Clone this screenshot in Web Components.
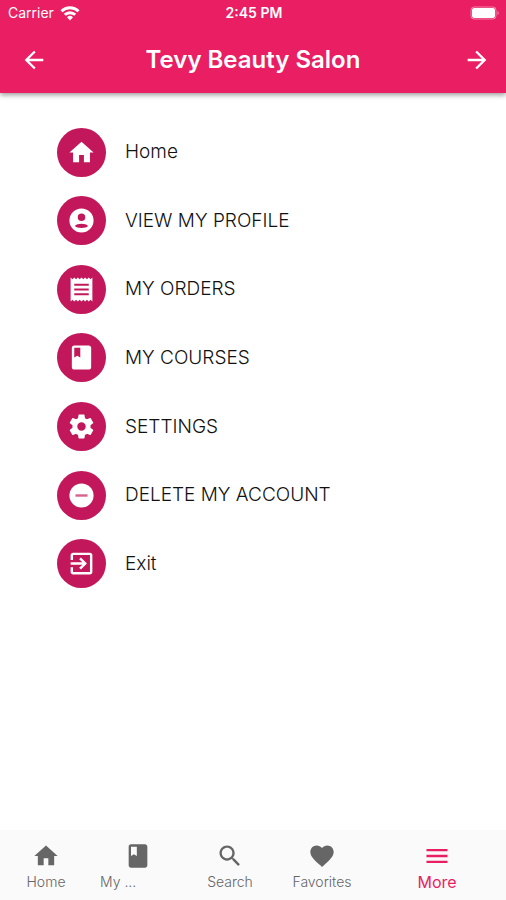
<!DOCTYPE html>
<html lang="en">
<head>
<meta charset="utf-8">
<meta name="viewport" content="width=device-width, initial-scale=1">
<title>Tevy Beauty Salon</title>
<style>
  body {
    margin: 0;
    font-family: Inter, 'Liberation Sans', sans-serif;
    background: #fff;
  }
</style>
</head>
<body>
<salon-app></salon-app>

<script>
// 24x24 icon shapes, filled with the current text colour
const ICONS = {
  home: '<path d="M10 20v-6h4v6h5v-8h3L12 3 2 12h3v8z"/>',
  back: '<path d="M20 11H7.83l5.59-5.59L12 4l-8 8 8 8 1.41-1.41L7.83 13H20v-2z"/>',
  forward: '<path d="M12 4l-1.41 1.41L16.17 11H4v2h12.17l-5.58 5.59L12 20l8-8z"/>',
  profile: '<path fill-rule="evenodd" d="M12 2a10 10 0 1 0 0 20 10 10 0 0 0 0-20zm0 4.2a3.1 3.1 0 1 1 0 6.2 3.1 3.1 0 0 1 0-6.2zm0 12c-2.500 0-4.400-.4-5.400-1.600.6-1.300 3.400-1.900 5.400-1.900s4.800.6 5.400 1.900c-1 1.200-2.900 1.600-5.400 1.600z"/>',
  orders: '<path d="M18 16.800H6v-1.600h12v1.600zm0-4H6v-1.600h12v1.600zm0-4H6V7.200h12v1.600zM3 22l1.500-1.500L6 22l1.500-1.500L9 22l1.500-1.500L12 22l1.500-1.500L15 22l1.500-1.500L18 22l1.500-1.500L21 22V2l-1.500 1.500L18 2l-1.500 1.500L15 2l-1.500 1.500L12 2l-1.500 1.500L9 2 7.500 3.500 6 2 4.500 3.500 3 2v20z"/>',
  book: '<path d="M18 2H6c-1.100 0-2 .9-2 2v16c0 1.100.9 2 2 2h12c1.100 0 2-.9 2-2V4c0-1.100-.9-2-2-2zM6 4h5v8l-2.500-1.500L6 12V4z"/>',
  settings: '<path d="M19.430 12.980c.04-.32.07-.64.07-.98s-.03-.66-.07-.98l2.110-1.650c.19-.15.24-.42.12-.64l-2-3.460c-.12-.22-.39-.3-.61-.22l-2.490 1c-.52-.4-1.080-.73-1.690-.98l-.38-2.650C14.460 2.180 14.250 2 14 2h-4c-.25 0-.46.18-.49.42l-.38 2.650c-.61.25-1.170.59-1.690.98l-2.490-1c-.23-.09-.49 0-.61.22l-2 3.460c-.13.22-.07.49.12.64l2.110 1.650c-.04.32-.07.65-.07.98s.03.66.07.98l-2.110 1.650c-.19.15-.24.42-.12.64l2 3.460c.12.22.39.3.61.22l2.490-1c.52.4 1.080.73 1.690.98l.38 2.650c.03.24.24.42.49.42h4c.25 0 .46-.18.49-.42l.38-2.650c.61-.25 1.170-.59 1.690-.98l2.490 1c.23.09.49 0 .61-.22l2-3.460c.12-.22.07-.49-.12-.64l-2.110-1.650zM12 15.500c-1.930 0-3.500-1.570-3.500-3.500s1.570-3.500 3.500-3.500 3.500 1.570 3.500 3.500-1.570 3.500-3.500 3.500z"/>',
  remove: '<path d="M12 2a10 10 0 1 0 0 20 10 10 0 0 0 0-20z"/><path fill="#d8628e" d="M7 11h10v2H7z"/>',
  exit: '<path d="M10.090 15.590L11.500 17l5-5-5-5-1.410 1.410L12.670 11H3v2h9.670l-2.580 2.590zM19 3H5c-1.110 0-2 .9-2 2v4h2V5h14v14H5v-4H3v4c0 1.100.89 2 2 2h14c1.100 0 2-.9 2-2V5c0-1.100-.9-2-2-2z"/>',
  search: '<path d="M15.500 14h-.79l-.28-.27C15.410 12.590 16 11.110 16 9.500 16 5.910 13.090 3 9.500 3S3 5.910 3 9.500 5.910 16 9.500 16c1.610 0 3.090-.59 4.230-1.570l.27.28v.79l5 4.990L20.490 19l-4.990-5zm-6 0C7.010 14 5 11.990 5 9.500S7.010 5 9.500 5 14 7.010 14 9.500 11.990 14 9.500 14z"/>',
  heart: '<path d="M12 21.350l-1.450-1.320C5.400 15.360 2 12.280 2 8.500 2 5.420 4.420 3 7.500 3c1.740 0 3.410.81 4.500 2.090C13.090 3.810 14.760 3 16.500 3 19.580 3 22 5.420 22 8.500c0 3.780-3.400 6.860-8.550 11.540L12 21.350z"/>',
  more: '<path d="M3 18h18v-2H3v2zm0-5h18v-2H3v2zm0-7v2h18V6H3z"/>'
};

class AppIcon extends HTMLElement {
  connectedCallback() {
    if (this.shadowRoot) return;
    this.attachShadow({ mode: 'open' }).innerHTML = `
      <style>
        :host { display: block; width: var(--icon-size, 28px); height: var(--icon-size, 28px); }
        svg { display: block; width: 100%; height: 100%; fill: currentColor; }
      </style>
      <svg viewBox="0 0 24 24" aria-hidden="true">${ICONS[this.getAttribute('name')]}</svg>
    `;
  }
}

class StatusBar extends HTMLElement {
  connectedCallback() {
    if (this.shadowRoot) return;
    this.attachShadow({ mode: 'open' }).innerHTML = `
      <style>
        :host {
          display: grid;
          grid-template-columns: 1fr auto 1fr;
          align-items: center;
          height: 26px;
          padding: 0 6px 0 8px;
          font-size: 14px;
          line-height: 16px;
        }
        .carrier { display: flex; align-items: center; gap: 6px; }
        .time { font-weight: 600; }
        svg { display: block; }
        .battery { justify-self: end; }
      </style>
      <div class="carrier">
        <span>Carrier</span>
        <svg width="20" height="15" viewBox="0 0 20 15" fill="none" stroke="#fff" stroke-width="3" aria-hidden="true">
          <path d="M1.5 5.2a12 12 0 0 1 17 0"/>
          <path d="M4.8 8.8a7.4 7.4 0 0 1 10.4 0"/>
          <path d="M10 14.5l-3-3.2a4.3 4.3 0 0 1 6 0z" fill="#fff" stroke="none"/>
        </svg>
      </div>
      <span class="time"><slot></slot></span>
      <svg class="battery" width="30" height="14" viewBox="0 0 30 14" aria-hidden="true">
        <rect x="1" y="1" width="25" height="12" rx="3" fill="none" stroke="#fff" stroke-opacity=".45"/>
        <rect x="2" y="2" width="23" height="10" rx="2" fill="#fff"/>
        <path d="M27.5 5v4c1.6-.6 1.6-3.4 0-4z" fill="#fff" fill-opacity=".5"/>
      </svg>
    `;
  }
}

class AppHeader extends HTMLElement {
  connectedCallback() {
    if (this.shadowRoot) return;
    this.attachShadow({ mode: 'open' }).innerHTML = `
      <style>
        :host {
          display: block;
          position: relative;
          color: #fff;
          background: #e91e63;
          box-shadow: 0 2px 5px rgba(0, 0, 0, 0.4);
        }
        .bar {
          display: grid;
          grid-template-columns: 1fr auto 1fr;
          align-items: center;
          height: 67px;
          padding: 0 15px;
          box-sizing: border-box;
        }
        h1 { margin: 0; font-size: 24px; line-height: 32px; font-weight: 600; }
        button {
          justify-self: start;
          padding: 0 0 0 5px;
          border: 0;
          color: inherit;
          background: none;
          cursor: pointer;
        }
        button:last-child { justify-self: end; }
      </style>
      <status-bar>2:45 PM</status-bar>
      <div class="bar">
        <button aria-label="Back"><app-icon name="back"></app-icon></button>
        <h1><slot></slot></h1>
        <button aria-label="Forward"><app-icon name="forward"></app-icon></button>
      </div>
    `;
  }
}

class MenuItem extends HTMLElement {
  connectedCallback() {
    if (this.shadowRoot) return;
    this.attachShadow({ mode: 'open' }).innerHTML = `
      <style>
        :host { display: flex; align-items: center; }
        a {
          display: flex;
          align-items: center;
          gap: 19px;
          color: #111;
          font-size: 19px;
          line-height: 24px;
          font-weight: 300;
          text-decoration: none;
        }
        .circle {
          display: grid;
          place-items: center;
          flex: none;
          width: 49px;
          height: 49px;
          border-radius: 50%;
          color: #fff;
          background: #c2185b;
          --icon-size: 29px;
        }
      </style>
      <a href="#">
        <span class="circle"><app-icon name="${this.getAttribute('icon')}"></app-icon></span>
        <span><slot></slot></span>
      </a>
    `;
  }
}

class NavTab extends HTMLElement {
  connectedCallback() {
    if (this.shadowRoot) return;
    this.attachShadow({ mode: 'open' }).innerHTML = `
      <style>
        :host { display: block; flex: 2 1 0; min-width: 0; color: #666; font-size: 14px; }
        :host([active]) { flex-grow: 3; color: #e91e63; font-size: 16px; }
        a {
          display: flex;
          flex-direction: column;
          align-items: center;
          gap: 4px;
          padding: 12px 8px 10px;
          color: inherit;
          text-decoration: none;
        }
        .label { width: 100%; line-height: 16px; font-weight: 300; text-align: center; }
        :host([active]) .label { font-weight: 400; }
        :host([cut]) .label { text-align: left; }
      </style>
      <a href="#">
        <app-icon name="${this.getAttribute('icon')}"></app-icon>
        <span class="label"><slot></slot></span>
      </a>
    `;
  }
}

class SalonApp extends HTMLElement {
  constructor() {
    super();
    this.attachShadow({ mode: 'open' });
  }

  connectedCallback() {
    this.render();
  }

  render() {
    this.shadowRoot.innerHTML = `
      <style>
        :host { display: flex; flex-direction: column; min-height: 100vh; }
        main { flex: 1; padding: 25px 24px 24px 57px; }
        .menu {
          display: grid;
          grid-auto-rows: 1fr;
          min-height: 480px;
        }
        .tabs { display: flex; background: #fafafa; }
      </style>
      <app-header>Tevy Beauty Salon</app-header>
      <main>
        <nav class="menu" aria-label="Menu">
          <menu-item icon="home">Home</menu-item>
          <menu-item icon="profile">VIEW MY PROFILE</menu-item>
          <menu-item icon="orders">MY ORDERS</menu-item>
          <menu-item icon="book">MY COURSES</menu-item>
          <menu-item icon="settings">SETTINGS</menu-item>
          <menu-item icon="remove">DELETE MY ACCOUNT</menu-item>
          <menu-item icon="exit">Exit</menu-item>
        </nav>
      </main>
      <nav class="tabs" aria-label="Tabs">
        <nav-tab icon="home">Home</nav-tab>
        <nav-tab icon="book" cut>My ...</nav-tab>
        <nav-tab icon="search">Search</nav-tab>
        <nav-tab icon="heart">Favorites</nav-tab>
        <nav-tab icon="more" active>More</nav-tab>
      </nav>
    `;
  }
}

customElements.define('app-icon', AppIcon);
customElements.define('status-bar', StatusBar);
customElements.define('app-header', AppHeader);
customElements.define('menu-item', MenuItem);
customElements.define('nav-tab', NavTab);
customElements.define('salon-app', SalonApp);
</script>
</body>
</html>
